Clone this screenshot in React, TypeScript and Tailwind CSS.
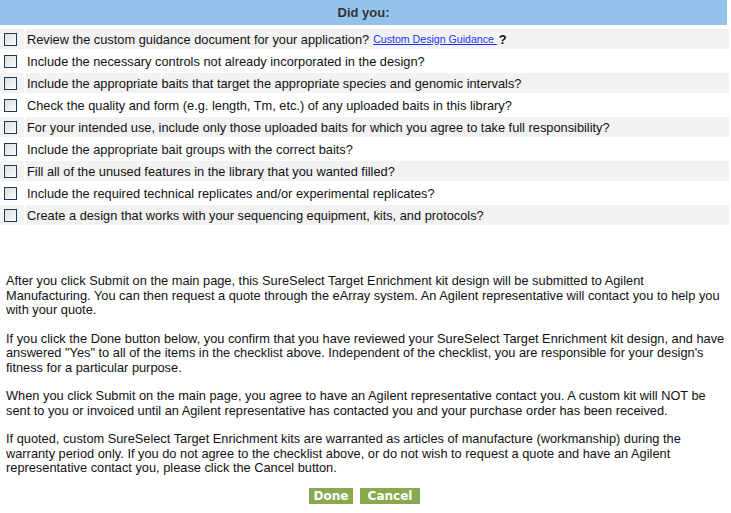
import React from 'react';

const checklist = [
  'Include the necessary controls not already incorporated in the design?',
  'Include the appropriate baits that target the appropriate species and genomic intervals?',
  'Check the quality and form (e.g. length, Tm, etc.) of any uploaded baits in this library?',
  'For your intended use, include only those uploaded baits for which you agree to take full responsibility?',
  'Include the appropriate bait groups with the correct baits?',
  'Fill all of the unused features in the library that you wanted filled?',
  'Include the required technical replicates and/or experimental replicates?',
  'Create a design that works with your sequencing equipment, kits, and protocols?',
];

function Box() {
  return (
    <span className="block w-[13px] h-[13px] border border-[#1c3b5c] bg-gradient-to-br from-[#dcdcdc] to-[#fbfbfb]" />
  );
}

function Row({ odd, children }: { odd: boolean; children: React.ReactNode }) {
  return (
    <div className="flex gap-[2px] h-[20px] mb-[2px]">
      <div className={`w-[24px] flex items-center pl-[4px] ${odd ? 'bg-[#f2f2f2]' : ''}`}>
        <Box />
      </div>
      <div className={`flex-1 flex items-center pl-[1px] pt-[1px] ${odd ? 'bg-[#f2f2f2]' : ''}`}>{children}</div>
    </div>
  );
}

export default function App() {
  return (
    <div className="w-[731px] h-[513px] bg-white text-[#111] font-['Liberation_Sans',Arial,sans-serif] text-[12.8px] overflow-hidden">
      <div className="w-[727px] h-[25px] bg-[#93c3ea] flex items-center justify-center font-bold text-[13px] text-[#333]">
        Did you:
      </div>
      <div className="w-[729px] mt-[4px]">
        <Row odd>
          <span>Review the custom guidance document for your application?</span>
          <a href="#" className="ml-[4px] text-[10.6px] text-[#1a33ff] underline whitespace-pre">Custom Design Guidance </a>
          <span className="ml-[2px] font-bold">?</span>
        </Row>
        {checklist.map((t, i) => (
          <Row key={t} odd={i % 2 === 1}>
            <span>{t}</span>
          </Row>
        ))}
      </div>
      <div className="w-[727px] pl-[6px] pt-[47px] leading-[14.5px]">
        <p className="mb-[14px]">
          After you click Submit on the main page, this SureSelect Target Enrichment kit design will be submitted to Agilent
          Manufacturing. You can then request a quote through the eArray system. An Agilent representative will contact you to help you
          with your quote.
        </p>
        <p className="mb-[14px]">
          If you click the Done button below, you confirm that you have reviewed your SureSelect Target Enrichment kit design, and have
          answered "Yes" to all of the items in the checklist above. Independent of the checklist, you are responsible for your design's
          fitness for a particular purpose.
        </p>
        <p className="mb-[14px]">
          When you click Submit on the main page, you agree to have an Agilent representative contact you. A custom kit will NOT be
          sent to you or invoiced until an Agilent representative has contacted you and your purchase order has been received.
        </p>
        <p>
          If quoted, custom SureSelect Target Enrichment kits are warranted as articles of manufacture (workmanship) during the
          warranty period only. If you do not agree to the checklist above, or do not wish to request a quote and have an Agilent
          representative contact you, please click the Cancel button.
        </p>
      </div>
      <div className="flex justify-center gap-[7px] mt-[12px] pr-[2px]">
        <button className="w-[44px] h-[16px] bg-[#88a94e] text-white font-bold text-[12px] leading-[16px] font-['DejaVu_Sans',Verdana,sans-serif]">
          Done
        </button>
        <button className="w-[60px] h-[16px] bg-[#88a94e] text-white font-bold text-[12px] leading-[16px] font-['DejaVu_Sans',Verdana,sans-serif]">
          Cancel
        </button>
      </div>
    </div>
  );
}
